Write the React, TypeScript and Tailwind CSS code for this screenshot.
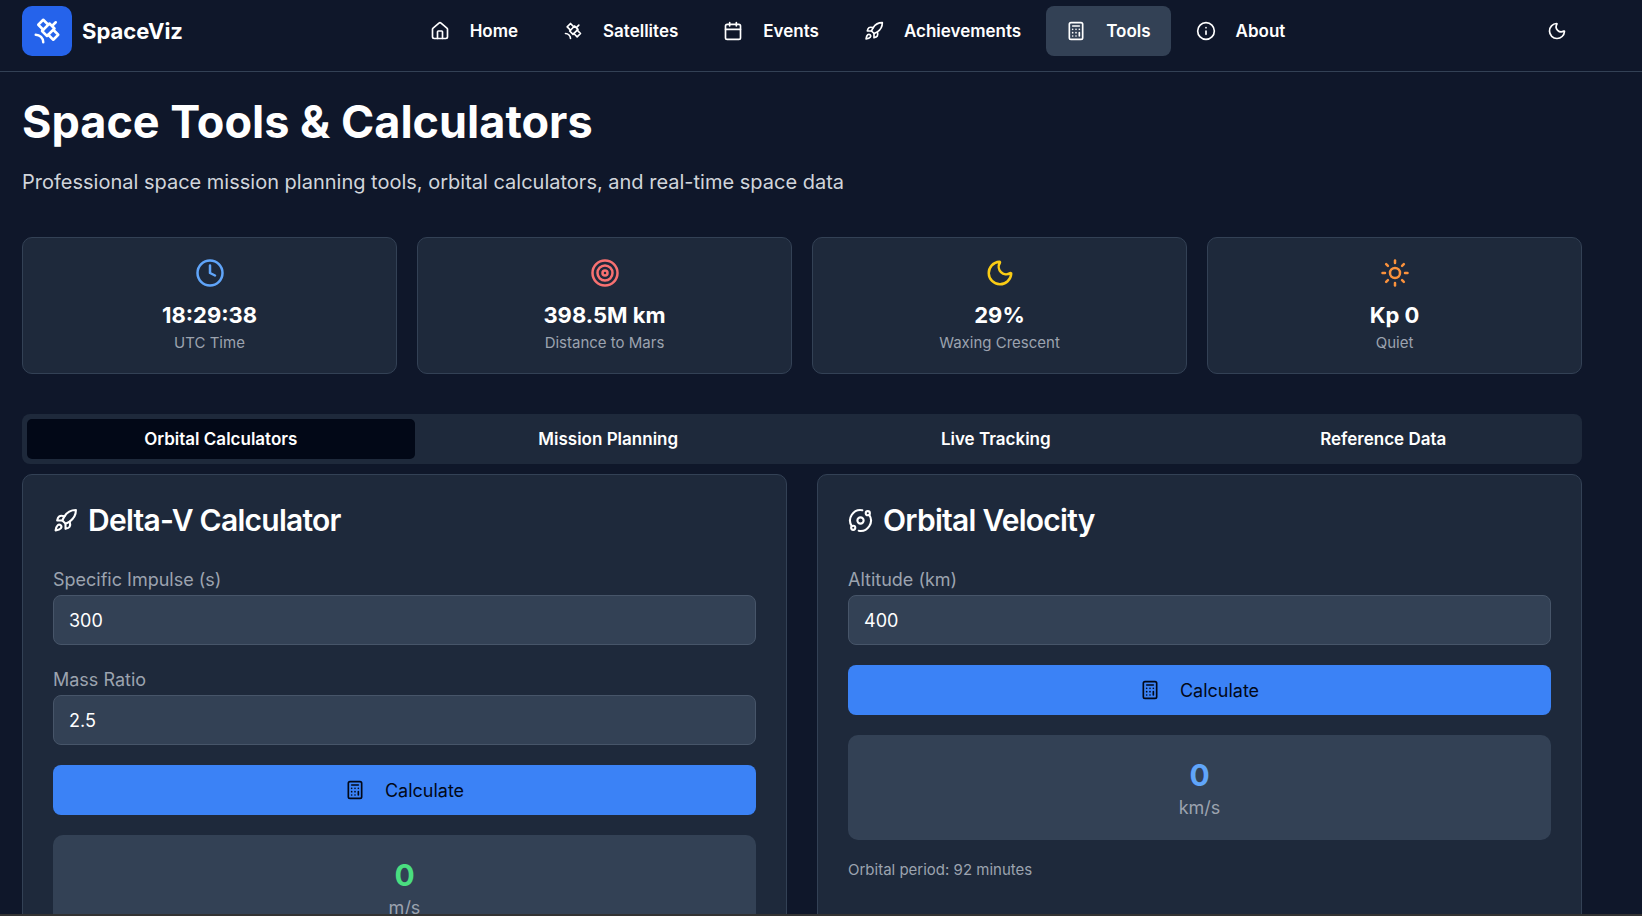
import { useState } from "react";
import {
  Calculator,
  Calendar,
  Clock,
  House,
  Info,
  Moon,
  Orbit,
  Rocket,
  Sun,
  Target,
} from "lucide-react";

// Satellite with square panels
function Satellite({ className }: { className?: string }) {
  return (
    <svg
      viewBox="0 0 24 24"
      fill="none"
      stroke="currentColor"
      strokeWidth="2"
      strokeLinecap="round"
      strokeLinejoin="round"
      aria-hidden="true"
      className={className}
    >
      <path d="M13 7 9 3 5 7l4 4" />
      <path d="m17 11 4 4-4 4-4-4" />
      <path d="m8 12 4 4 6-6-4-4Z" />
      <path d="m16 8 3-3" />
      <path d="M9 21a6 6 0 0 0-6-6" />
    </svg>
  );
}

const navItems = [
  { label: "Home", icon: House },
  { label: "Satellites", icon: Satellite },
  { label: "Events", icon: Calendar },
  { label: "Achievements", icon: Rocket },
  { label: "Tools", icon: Calculator },
  { label: "About", icon: Info },
];

const stats = [
  { value: "18:29:38", label: "UTC Time", icon: Clock, color: "text-[#60a5fa]" },
  { value: "398.5M km", label: "Distance to Mars", icon: Target, color: "text-[#f87171]" },
  { value: "29%", label: "Waxing Crescent", icon: Moon, color: "text-[#facc15]" },
  { value: "Kp 0", label: "Quiet", icon: Sun, color: "text-[#fb923c]" },
];

const tabs = ["Orbital Calculators", "Mission Planning", "Live Tracking", "Reference Data"];

function Field({ id, label, value }: { id: string; label: string; value: string }) {
  return (
    <div>
      <label htmlFor={id} className="block text-[18px] leading-[30px] text-[#9ca3af]">
        {label}
      </label>
      <input
        id={id}
        type="text"
        inputMode="decimal"
        defaultValue={value}
        className="block h-[50px] w-full rounded-lg border border-[#475569] bg-[#334155] px-[15px] text-[18px] text-white outline-none"
      />
    </div>
  );
}

function CalculateButton() {
  return (
    <button
      type="button"
      className="flex h-[50px] w-full items-center justify-center gap-5 rounded-lg bg-[#3b82f6] text-[18px] text-[#020817]"
    >
      <Calculator className="size-5" />
      Calculate
    </button>
  );
}

function Result({ value, unit, color }: { value: string; unit: string; color: string }) {
  return (
    <div className="rounded-[10px] bg-[#334155] p-5 text-center">
      <div className={`text-[30px] leading-10 font-bold ${color}`}>{value}</div>
      <div className="text-[18px] leading-[25px] text-[#9ca3af]">{unit}</div>
    </div>
  );
}

function Header() {
  return (
    <header className="border-b border-[#334155] pt-[6px] pb-[15px]">
      <div className="mx-[2px] flex max-w-[1600px] items-center justify-between px-5">
        <a href="#" className="flex items-center gap-[10px]">
          <span className="flex size-[50px] items-center justify-center rounded-[10px] bg-[#2563eb]">
            <Satellite className="size-[30px]" />
          </span>
          <span className="text-[22px] leading-[35px] font-bold">SpaceViz</span>
        </a>
        <nav className="flex gap-[5px]">
          {navItems.map(({ label, icon: Icon }) => (
            <a
              key={label}
              href="#"
              className={`flex h-[50px] items-center gap-5 rounded-lg px-5 text-[17px] leading-[26px] font-semibold ${
                label === "Tools" ? "bg-[#334155]" : ""
              }`}
            >
              <Icon className="size-5" />
              {label}
            </a>
          ))}
        </nav>
        <button
          type="button"
          aria-label="Toggle theme"
          className="flex size-[50px] items-center justify-center rounded-lg"
        >
          <Moon className="size-5" />
        </button>
      </div>
    </header>
  );
}

export default function App() {
  const [activeTab, setActiveTab] = useState(tabs[0]);

  return (
    <div className="h-screen overflow-hidden border-b-2 border-[#333333] bg-[#0f172a] font-['Inter',sans-serif] text-white">
      <Header />
      <main className="mx-[2px] max-w-[1600px] px-5 pt-[25px]">
        <h1 className="text-[45px] leading-[50px] font-bold">Space Tools &amp; Calculators</h1>
        <p className="mt-5 text-[20px] leading-[30px] text-[#d1d5db]">
          Professional space mission planning tools, orbital calculators, and real-time space data
        </p>

        <div className="mt-10 grid grid-cols-4 gap-5">
          {stats.map(({ value, label, icon: Icon, color }) => (
            <div
              key={label}
              className="flex flex-col items-center rounded-[10px] border border-[#334155] bg-[#1e293b] p-5"
            >
              <Icon className={`mb-[10px] size-[30px] ${color}`} />
              <div className="text-[22px] leading-[35px] font-bold">{value}</div>
              <div className="text-[15px] leading-5 text-[#9ca3af]">{label}</div>
            </div>
          ))}
        </div>

        <div role="tablist" className="mt-10 grid h-[50px] grid-cols-4 rounded-lg bg-[#1e293b] p-[5px]">
          {tabs.map((tab) => (
            <button
              key={tab}
              type="button"
              role="tab"
              aria-selected={tab === activeTab}
              onClick={() => setActiveTab(tab)}
              className={`rounded-[5px] text-[17px] leading-[26px] font-semibold ${
                tab === activeTab ? "bg-[#020817]" : ""
              }`}
            >
              {tab}
            </button>
          ))}
        </div>

        <div className="mt-[10px] grid grid-cols-2 gap-[30px]">
          <section className="rounded-[10px] border border-[#334155] bg-[#1e293b] p-[30px]">
            <h2 className="mb-[30px] flex items-center gap-[10px] text-[30px] leading-[30px] font-semibold tracking-tight">
              <Rocket className="size-[25px]" />
              Delta-V Calculator
            </h2>
            <div className="space-y-5">
              <Field id="impulse" label="Specific Impulse (s)" value="300" />
              <Field id="mass-ratio" label="Mass Ratio" value="2.5" />
              <CalculateButton />
              <Result value="0" unit="m/s" color="text-[#4ade80]" />
            </div>
          </section>

          <section className="rounded-[10px] border border-[#334155] bg-[#1e293b] p-[30px]">
            <h2 className="mb-[30px] flex items-center gap-[10px] text-[30px] leading-[30px] font-semibold tracking-tight">
              <Orbit className="size-[25px]" />
              Orbital Velocity
            </h2>
            <div className="space-y-5">
              <Field id="altitude" label="Altitude (km)" value="400" />
              <CalculateButton />
              <Result value="0" unit="km/s" color="text-[#60a5fa]" />
              <p className="text-[15px] leading-5 text-[#9ca3af]">Orbital period: 92 minutes</p>
            </div>
          </section>
        </div>
      </main>
    </div>
  );
}
